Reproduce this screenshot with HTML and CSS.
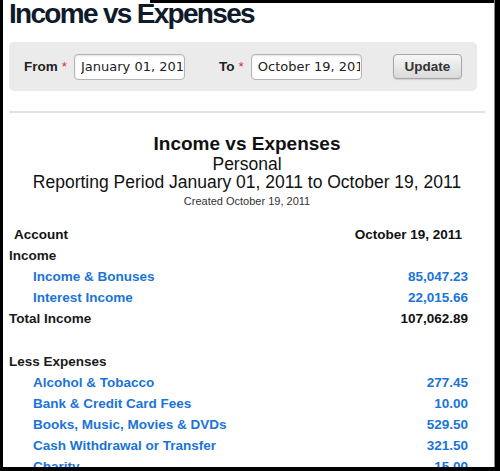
FILE: index.html
```html
<!DOCTYPE html>
<html>
<head>
<meta charset="utf-8">
<title>Income vs Expenses</title>
<link rel="stylesheet" href="styles.css">
</head>
<body>
<div class="frame">
  <h1 class="page-title">Income vs Expenses</h1>
  <form class="filter">
    <label class="lbl">From<span class="req">*</span></label>
    <input class="date" type="text" value="January 01, 2011">
    <label class="lbl lbl-to">To<span class="req">*</span></label>
    <input class="date" type="text" value="October 19, 2011">
    <button class="btn" type="button">Update</button>
  </form>
  <section class="report">
    <div class="report-head">
      <h2 class="report-title">Income vs Expenses</h2>
      <div class="sub">Personal</div>
      <div class="sub">Reporting Period January 01, 2011 to October 19, 2011</div>
      <div class="created">Created October 19, 2011</div>
    </div>
    <table class="tbl">
      <thead>
        <tr><th class="h-acc">Account</th><th class="h-date">October 19, 2011</th></tr>
      </thead>
      <tbody>
        <tr><td class="sec">Income</td><td></td></tr>
        <tr><td class="item"><a href="#">Income &amp; Bonuses</a></td><td class="amt"><a href="#">85,047.23</a></td></tr>
        <tr><td class="item"><a href="#">Interest Income</a></td><td class="amt"><a href="#">22,015.66</a></td></tr>
        <tr><td class="sec">Total Income</td><td class="amt total">107,062.89</td></tr>
        <tr><td class="sec">&nbsp;</td><td></td></tr>
        <tr><td class="sec">Less Expenses</td><td></td></tr>
        <tr><td class="item"><a href="#">Alcohol &amp; Tobacco</a></td><td class="amt"><a href="#">277.45</a></td></tr>
        <tr><td class="item"><a href="#">Bank &amp; Credit Card Fees</a></td><td class="amt"><a href="#">10.00</a></td></tr>
        <tr><td class="item"><a href="#">Books, Music, Movies &amp; DVDs</a></td><td class="amt"><a href="#">529.50</a></td></tr>
        <tr><td class="item"><a href="#">Cash Withdrawal or Transfer</a></td><td class="amt"><a href="#">321.50</a></td></tr>
        <tr><td class="item"><a href="#">Charity</a></td><td class="amt"><a href="#">15.00</a></td></tr>
      </tbody>
    </table>
  </section>
</div>
</body>
</html>
```

FILE: styles.css
```css
html, body {
  margin: 0;
  padding: 0;
  background: #000;
}

body {
  font-family: "Liberation Sans", Arial, sans-serif;
  color: #111;
}

.frame {
  position: relative;
  box-sizing: border-box;
  margin-left: 3px;
  width: 492px;
  height: 467px;
  padding-left: 6px;
  background: #fff;
  border-right: 1px solid #8a8a8a;
  overflow: hidden;
}

.frame::before {
  content: "";
  position: absolute;
  top: 0;
  left: 147px;
  right: 0;
  height: 3px;
  background: #000;
}

.page-title {
  margin: 0;
  font-size: 28px;
  line-height: 28px;
  font-weight: bold;
  letter-spacing: -1.7px;
  color: #0f1b2b;
}

.filter {
  box-sizing: border-box;
  margin: 14px 0 0 0;
  width: 468px;
  height: 49px;
  padding-left: 15px;
  background: #ebebeb;
  border-radius: 5px;
  display: flex;
  align-items: center;
}

.lbl {
  font-size: 13.5px;
  font-weight: bold;
  color: #222;
}

.lbl-to {
  margin-left: 34px;
}

.req {
  margin-left: 4px;
  color: #d2331f;
  font-weight: normal;
}

.date {
  box-sizing: border-box;
  margin-left: 7px;
  width: 111px;
  height: 26px;
  padding: 0 1px 0 6px;
  border: 1px solid #b4b4b4;
  border-radius: 4px;
  background: #fff;
  box-shadow: inset 0 1px 2px rgba(0, 0, 0, 0.12);
  font-family: "DejaVu Sans", sans-serif;
  font-size: 13px;
  color: #222;
  outline: none;
}

.btn {
  box-sizing: border-box;
  margin-left: 31px;
  width: 69px;
  height: 25px;
  padding: 0;
  border: 1px solid #a6a6a6;
  border-radius: 4px;
  background: linear-gradient(#f7f7f7, #d9d9d9);
  box-shadow: 0 1px 1px rgba(0, 0, 0, 0.12);
  font-family: "Liberation Sans", Arial, sans-serif;
  font-size: 13.5px;
  font-weight: bold;
  color: #333;
}

.report {
  margin-top: 20px;
  width: 476px;
  border-top: 2px solid #e2e2e2;
  padding-top: 20px;
}

.report-head {
  text-align: center;
  color: #111;
}

.report-title {
  margin: 0;
  font-size: 19px;
  line-height: 22px;
  font-weight: bold;
}

.sub {
  font-size: 17.5px;
  line-height: 18px;
}

.created {
  margin-top: 3px;
  font-size: 11px;
  line-height: 15px;
  color: #333;
}

.tbl {
  margin-top: 15px;
  width: 459px;
  border-collapse: collapse;
  font-size: 13.5px;
  font-weight: bold;
}

.tbl th,
.tbl td {
  padding: 0;
  height: 21.1px;
  line-height: 21.1px;
  white-space: nowrap;
}

.h-acc {
  text-align: left;
  padding-left: 5px !important;
}

.h-date {
  text-align: right;
  padding-right: 6px !important;
}

.sec {
  text-align: left;
  color: #1a1a1a;
}

.item {
  padding-left: 24px !important;
}

.amt {
  text-align: right;
}

.tbl a {
  color: #1a74d6;
  text-decoration: none;
}

.total {
  color: #111;
}
```
